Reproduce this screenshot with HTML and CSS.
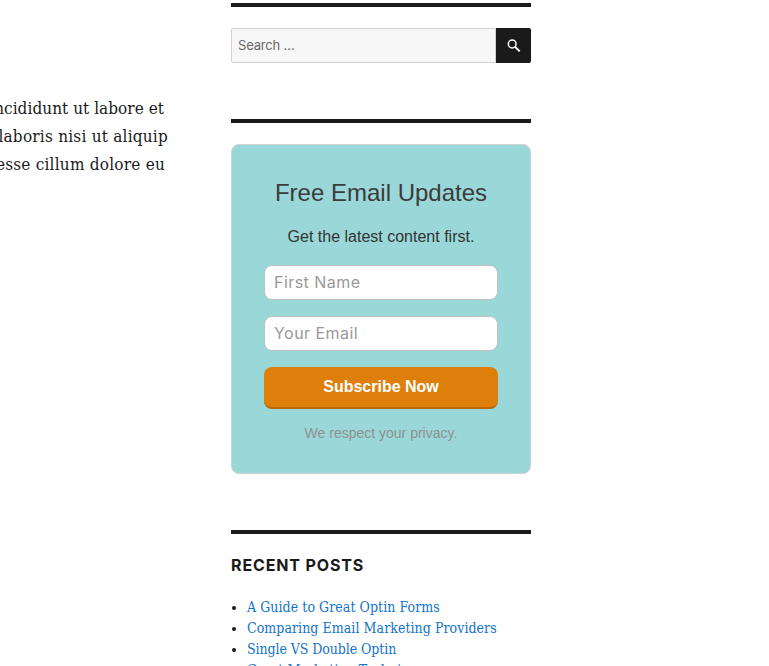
FILE: index.html
```html
<!DOCTYPE html>
<html lang="en">
<head>
<meta charset="utf-8">
<title>Blog</title>
<link rel="stylesheet" href="styles.css">
</head>
<body>
<div class="page">
  <main class="content">
    <p class="line line-a"><span>ncididunt ut labore et</span></p>
    <p class="line line-b"><span>laboris nisi ut aliquip</span></p>
    <p class="line line-c"><span>esse cillum dolore eu</span></p>
  </main>
  <aside class="sidebar">
    <section class="widget widget-search">
      <form class="search">
        <input class="search-field" type="search" placeholder="Search …" aria-label="Search">
        <button class="search-submit" type="button" aria-label="Search">
          <svg width="14" height="14" viewBox="0 0 14 14" fill="none" stroke="#fff"><circle cx="5.2" cy="5" r="3.9" stroke-width="1.5"/><path d="M8.1 7.9L12.7 12.4" stroke-width="2"/></svg>
        </button>
      </form>
    </section>
    <section class="widget widget-optin">
      <form class="optin">
        <h2 class="optin-title">Free Email Updates</h2>
        <p class="optin-text">Get the latest content first.</p>
        <input class="optin-field" type="text" placeholder="First Name">
        <input class="optin-field" type="email" placeholder="Your Email">
        <button class="optin-submit" type="button">Subscribe Now</button>
        <p class="optin-note">We respect your privacy.</p>
      </form>
    </section>
    <section class="widget widget-posts">
      <h2 class="widget-title">Recent Posts</h2>
      <ul class="posts">
        <li><a href="#">A Guide to Great Optin Forms</a></li>
        <li><a href="#">Comparing Email Marketing Providers</a></li>
        <li><a class="post-c" href="#">Single VS Double Optin</a></li>
        <li><a href="#">Great Marketing Techniques</a></li>
      </ul>
    </section>
  </aside>
</div>
</body>
</html>
```
FILE: styles.css
```css
* { box-sizing: border-box; }
body { margin: 0; background: #fff; color: #1a1a1a; }
.page {
  display: flex;
  gap: 63px;
  height: 666px;
  padding-top: 3px;
  overflow: hidden;
}
.content {
  display: flex;
  flex-direction: column;
  width: 168px;
  padding-top: 91px;
  overflow: hidden;
  font: 17px/28px "DejaVu Serif Condensed", "DejaVu Serif", serif;
  font-stretch: condensed;
  letter-spacing: 0.23px;
}
.line {
  display: flex;
  justify-content: flex-end;
  margin: 0;
  white-space: nowrap;
}
.line-a { padding-right: 4px; letter-spacing: 0.05px; }
.line-c { padding-right: 3px; letter-spacing: 0.23px; }
.sidebar { width: 300px; }
.widget { border-top: 4px solid #1a1a1a; }
.widget-search { height: 116px; padding-top: 21px; }
.widget-optin { height: 411px; padding-top: 21px; }
.search { display: flex; height: 35px; }
.search-field {
  width: 265px;
  padding: 0 6px 1px;
  border: 1px solid #d1d1d1;
  border-radius: 2px 0 0 2px;
  background: #f7f7f7;
  font: 13px Inter, "Open Sans", sans-serif;
  letter-spacing: -0.2px;
  appearance: none;
}
.search-field::placeholder { color: #686868; opacity: 1; }
.search-submit {
  display: flex;
  align-items: center;
  justify-content: center;
  width: 35px;
  padding: 0;
  border: 0;
  border-radius: 0 2px 2px 0;
  background: #1a1a1a;
}
.optin {
  display: flex;
  flex-direction: column;
  height: 330px;
  padding: 32px 32px 29px;
  border: 1px solid #d1d1d1;
  border-radius: 8px;
  background: #9ad7d8;
  font-family: "Liberation Sans", Arial, sans-serif;
  text-align: center;
}
.optin > * { flex-shrink: 0; }
.optin-title { margin: 0 0 16px; color: #3b3b3b; font-size: 24px; font-weight: 400; line-height: 32px; }
.optin-text { margin: 0 0 16px; color: #333; font-size: 16px; line-height: 24px; }
.optin-field {
  width: 234px;
  height: 35px;
  margin: 0 0 16px;
  padding: 0 9px 2px;
  border: 1px solid #c4bfbf;
  border-radius: 8px;
  background: #fff;
  font: 16px Inter, "Open Sans", sans-serif;
  letter-spacing: 0.45px;
}
.optin-field::placeholder { color: #999; opacity: 1; }
.optin-submit {
  height: 42px;
  margin: 0 0 14px;
  padding: 0;
  border: 0;
  border-bottom: 2px solid #be6500;
  border-radius: 8px;
  background: #de7f0b;
  color: #fff;
  font: bold 16px "Liberation Sans", Arial, sans-serif;
}
.optin-note { margin: 0; color: #8e9191; font-size: 14px; line-height: 20px; }
.widget-title {
  margin: 0;
  padding-top: 21px;
  font: 700 16px/21px Inter, "Open Sans", sans-serif;
  letter-spacing: 0.87px;
  text-transform: uppercase;
}
.posts {
  margin: 21px 0 0;
  padding-left: 16px;
  font: 14px/21px "DejaVu Serif Condensed", "DejaVu Serif", serif;
  font-stretch: condensed;
  letter-spacing: 0.06px;
  white-space: nowrap;
}
.posts li::marker { font-size: 13px; }
.posts a { color: #1272cc; text-decoration: none; }
.post-c { letter-spacing: -0.08px; }
```
